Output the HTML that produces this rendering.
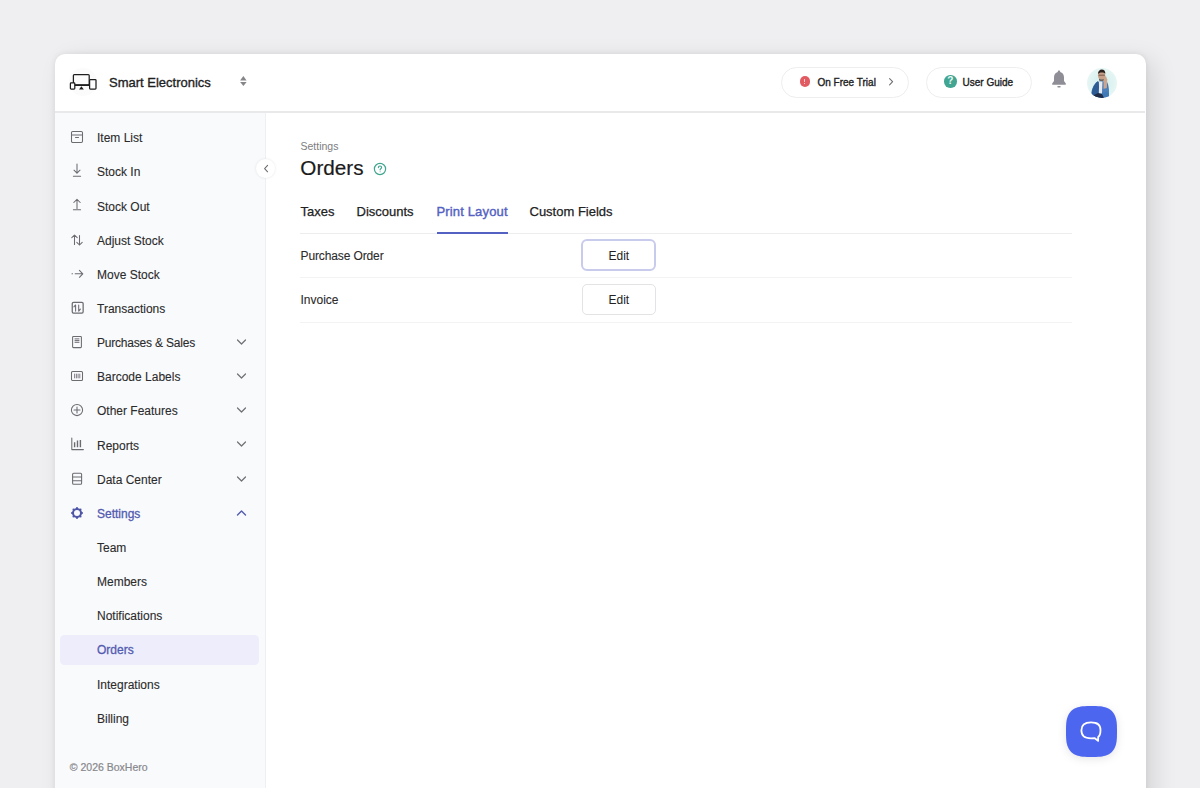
<!DOCTYPE html>
<html><head><meta charset="utf-8">
<style>
*{box-sizing:border-box;margin:0;padding:0}
html,body{width:1200px;height:788px;overflow:hidden;background:#efeff1;font-family:"Liberation Sans",sans-serif;color:#222}
.a{position:absolute}
.t{position:absolute;white-space:nowrap;line-height:1}
.md{-webkit-text-stroke:0.25px currentColor}
</style></head><body>
<div class="a" style="left:55px;top:54.3px;width:1090.5px;height:780px;background:#fff;border-radius:10px;box-shadow:0 0 6px rgba(0,0,0,0.08),8px 6px 24px rgba(0,0,0,0.11)"></div>
<div class="a" style="left:55px;top:111px;width:1090px;height:2px;background:#e9e9eb"></div>
<div class="a" style="left:55px;top:113px;width:210px;height:680px;background:#f9fafc"></div>
<div class="a" style="left:265px;top:113px;width:1px;height:680px;background:#f0f0f3"></div>
<div class="a" style="left:69px;top:68px;width:28px;height:28px;border-radius:50%;background:#fbfbfb"></div>
<svg class="a" style="left:69px;top:72px" width="28" height="20" viewBox="0 0 28 20" fill="none" stroke="#1e1e1e" stroke-width="1.25">
  <rect x="4.4" y="2.6" width="15.8" height="10.4" rx="0.9"/>
  <path d="M4.2 13.1h16" stroke-width="1.7"/>
  <path d="M10 17.4h4.8l-2.4-3.2z" fill="#1e1e1e" stroke="none"/>
  <rect x="20.6" y="7.5" width="6.4" height="9.6" rx="0.8" fill="#fff"/>
  <rect x="1.4" y="10.9" width="4.4" height="6.2" rx="0.8" fill="#fff"/>
</svg>
<div class="t" style="left:109px;top:75.70px;font-size:13px;color:#1f1f1f;-webkit-text-stroke:0.35px #1f1f1f">Smart Electronics</div>
<svg class="a" style="left:239px;top:75px" width="9" height="12" viewBox="0 0 9 12"><path d="M4.35 0.9L7.6 5.6H1.1z" fill="#86868a"/><path d="M4.35 10.9L7.6 7.1H1.1z" fill="#86868a"/></svg>
<div class="a" style="left:781px;top:67px;width:128px;height:31px;border-radius:16px;border:1px solid #eeeef0;background:#fff"></div>
<div class="a" style="left:799.7px;top:76.2px;width:10.4px;height:10.4px;border-radius:50%;background:#e25a62"></div>
<div class="a" style="left:804.4px;top:78.6px;width:1px;height:3.6px;background:#f6c9cc"></div><div class="a" style="left:804.4px;top:83.2px;width:1px;height:1px;background:#f6c9cc"></div>
<div class="t" style="left:817.5px;top:77.83px;font-size:10px;color:#222;-webkit-text-stroke:0.35px #222">On Free Trial</div>
<svg class="a" style="left:886px;top:76px" width="10" height="11" viewBox="0 0 10 11" fill="none" stroke="#6f6f73" stroke-width="1.1" stroke-linecap="round" stroke-linejoin="round"><path d="M3.6 2.6l3 3.1-3 3.1"/></svg>
<div class="a" style="left:926px;top:67px;width:106px;height:31px;border-radius:16px;border:1px solid #eeeef0;background:#fff"></div>
<div class="a" style="left:944px;top:75px;width:12.5px;height:12.5px;border-radius:50%;background:#42a592"></div>
<div class="t" style="left:944px;top:76px;width:12.5px;text-align:center;font-size:10px;font-weight:700;color:#eafaf6">?</div>
<div class="t" style="left:962.5px;top:77.53px;font-size:10px;color:#222;-webkit-text-stroke:0.35px #222">User Guide</div>
<svg class="a" style="left:1051px;top:70px" width="16" height="18" viewBox="0 0 16 18">
<path d="M8 0.6C8.7 0.6 9.2 1.1 9.2 1.8V2.1C11.5 2.7 13 4.7 13 7.3V10.9L14.8 13.5C15.1 14 14.8 14.8 14.2 14.8H1.8C1.2 14.8 0.9 14 1.2 13.5L3 10.9V7.3C3 4.7 4.5 2.7 6.8 2.1V1.8C6.8 1.1 7.3 0.6 8 0.6Z" fill="#8f8e96"/>
<rect x="6.3" y="16" width="3.4" height="1.5" rx="0.7" fill="#8f8e96"/>
</svg>
<svg class="a" style="left:1086px;top:66.5px" width="32" height="32" viewBox="0 0 32 32">
<defs><clipPath id="cav"><circle cx="16" cy="16" r="15"/></clipPath><radialGradient id="rg"><stop offset="0" stop-color="#cfeeee"/><stop offset="1" stop-color="#e6f6f4"/></radialGradient></defs>
<circle cx="16" cy="16" r="15" fill="url(#rg)"/>
<g clip-path="url(#cav)">
<path d="M5 31c0-8 2-13 6-16l5 -1 5 1c2 3 2 9 2 16z" fill="#3f79b6"/>
<path d="M6 24c1-4 3-8 6-10l1 6-2 11H6z" fill="#2d5b94"/>
<path d="M13 14.5h3.5l-.5 12h-3z" fill="#e7e9ee"/>
<path d="M8 28l4-2 4 1 2 4H8z" fill="#1e2c45"/>
<ellipse cx="15.6" cy="8.3" rx="3.6" ry="4.3" fill="#c6a08a"/>
<path d="M12 7c0-3 1.7-4.6 3.8-4.6 2.2 0 3.6 1.5 3.6 4.4-.8-1-2-1.4-3.7-1.4S12.8 5.9 12 7z" fill="#2b221e"/>
<path d="M12.6 8.2h6.2" stroke="#5a3a30" stroke-width=".7"/>
<path d="M13 11.5c1 1.3 4 1.3 5.2 0l-.4 2.2h-4.4z" fill="#4a3a30"/>
<path d="M17.5 11l2.3-2 1.5 3.5-.5 9-3.3 1z" fill="#cba58e"/>
<path d="M16.5 22l5.5-1 .5 3-5 2z" fill="#4b7fb8"/>
</g>
</svg>
<div class="t" style="left:97px;top:132.34px;font-size:12px;color:#2b2b2b;-webkit-text-stroke:0.1px currentColor">Item List</div>
<svg class="a" style="left:69.5px;top:130.20px;overflow:visible" width="14" height="14" viewBox="0 0 14 14" fill="none" stroke="#6c6c70" stroke-width="1.05" stroke-linecap="round" stroke-linejoin="round"><rect x="1.5" y="1.5" width="11" height="11" rx="1.2"/><path d="M1.5 5h11M5.5 7.5h3"/></svg>
<div class="t" style="left:97px;top:166.48px;font-size:12px;color:#2b2b2b;-webkit-text-stroke:0.1px currentColor">Stock In</div>
<svg class="a" style="left:69.5px;top:164.34px;overflow:visible" width="14" height="14" viewBox="0 0 14 14" fill="none" stroke="#6c6c70" stroke-width="1.05" stroke-linecap="round" stroke-linejoin="round"><path d="M7 0v9.2M4 6.2L7 9.2 10 6.2M3.4 12.2h7.2"/></svg>
<div class="t" style="left:97px;top:200.62px;font-size:12px;color:#2b2b2b;-webkit-text-stroke:0.1px currentColor">Stock Out</div>
<svg class="a" style="left:69.5px;top:198.48px;overflow:visible" width="14" height="14" viewBox="0 0 14 14" fill="none" stroke="#6c6c70" stroke-width="1.05" stroke-linecap="round" stroke-linejoin="round"><path d="M7 10.5V1.3M3.8 4.5L7 1.3l3.2 3.2M3.4 11.8h7.2"/></svg>
<div class="t" style="left:97px;top:234.76px;font-size:12px;color:#2b2b2b;-webkit-text-stroke:0.1px currentColor">Adjust Stock</div>
<svg class="a" style="left:69.5px;top:232.62px;overflow:visible" width="14" height="14" viewBox="0 0 14 14" fill="none" stroke="#6c6c70" stroke-width="1.05" stroke-linecap="round" stroke-linejoin="round"><path d="M4.5 11.5V2M1.8 4.7L4.5 2l2.7 2.7M9.5 2.5V12M6.8 9.3L9.5 12l2.7-2.7"/></svg>
<div class="t" style="left:97px;top:268.90px;font-size:12px;color:#2b2b2b;-webkit-text-stroke:0.1px currentColor">Move Stock</div>
<svg class="a" style="left:69.5px;top:266.76px;overflow:visible" width="14" height="14" viewBox="0 0 14 14" fill="none" stroke="#6c6c70" stroke-width="1.05" stroke-linecap="round" stroke-linejoin="round"><path d="M2 6.8h.5M5.2 6.8h7.4M9.4 3.3l3.4 3.5-3.4 3.5"/></svg>
<div class="t" style="left:97px;top:303.04px;font-size:12px;color:#2b2b2b;-webkit-text-stroke:0.1px currentColor">Transactions</div>
<svg class="a" style="left:69.5px;top:300.90px;overflow:visible" width="14" height="14" viewBox="0 0 14 14" fill="none" stroke="#6c6c70" stroke-width="1.05" stroke-linecap="round" stroke-linejoin="round"><rect x="2.25" y="1.25" width="10.9" height="10.9" rx="1.3" stroke-width="1.25"/><path d="M5.6 10.1V3.9L3.9 5.9M8.7 3.9v6.2l1.7-2"/></svg>
<div class="t" style="left:97px;top:337.18px;font-size:12px;color:#2b2b2b;-webkit-text-stroke:0.1px currentColor;letter-spacing:-0.2px">Purchases &amp; Sales</div>
<svg class="a" style="left:69.5px;top:335.04px;overflow:visible" width="14" height="14" viewBox="0 0 14 14" fill="none" stroke="#6c6c70" stroke-width="1.05" stroke-linecap="round" stroke-linejoin="round"><rect x="2.6" y="1.4" width="8.8" height="11.2" rx="0.8"/><path d="M5 3.9h4M5 5.6h4M5 7.3h4" stroke-width="1"/></svg>
<svg class="a" style="left:236px;top:338.04px" width="11" height="8" viewBox="0 0 11 8" fill="none" stroke="#6f6f73" stroke-width="1.2" stroke-linecap="round" stroke-linejoin="round"><path d="M1.5 2l4 4 4-4"/></svg>
<div class="t" style="left:97px;top:371.32px;font-size:12px;color:#2b2b2b;-webkit-text-stroke:0.1px currentColor">Barcode Labels</div>
<svg class="a" style="left:69.5px;top:369.18px;overflow:visible" width="14" height="14" viewBox="0 0 14 14" fill="none" stroke="#6c6c70" stroke-width="1.05" stroke-linecap="round" stroke-linejoin="round"><rect x="1.5" y="2.5" width="11" height="9" rx="1"/><path d="M4.6 4.7v4.6M6.4 4.7v4.6M8.1 4.7v4.6M9.8 4.7v4.6" stroke-width="0.85" stroke-linecap="butt"/></svg>
<svg class="a" style="left:236px;top:372.18px" width="11" height="8" viewBox="0 0 11 8" fill="none" stroke="#6f6f73" stroke-width="1.2" stroke-linecap="round" stroke-linejoin="round"><path d="M1.5 2l4 4 4-4"/></svg>
<div class="t" style="left:97px;top:405.46px;font-size:12px;color:#2b2b2b;-webkit-text-stroke:0.1px currentColor">Other Features</div>
<svg class="a" style="left:69.5px;top:403.32px;overflow:visible" width="14" height="14" viewBox="0 0 14 14" fill="none" stroke="#6c6c70" stroke-width="1.05" stroke-linecap="round" stroke-linejoin="round"><circle cx="7" cy="7" r="5.6"/><path d="M7 4v6M4 7h6"/></svg>
<svg class="a" style="left:236px;top:406.32px" width="11" height="8" viewBox="0 0 11 8" fill="none" stroke="#6f6f73" stroke-width="1.2" stroke-linecap="round" stroke-linejoin="round"><path d="M1.5 2l4 4 4-4"/></svg>
<div class="t" style="left:97px;top:439.60px;font-size:12px;color:#2b2b2b;-webkit-text-stroke:0.1px currentColor">Reports</div>
<svg class="a" style="left:69.5px;top:437.46px;overflow:visible" width="14" height="14" viewBox="0 0 14 14" fill="none" stroke="#6c6c70" stroke-width="1.05" stroke-linecap="round" stroke-linejoin="round"><path d="M1.8 1v11.6h11.6"/><path d="M4.6 10.2V5.2M7.5 10.2V3.6M10.4 10.2V2.9" stroke-width="1.4" stroke-linecap="butt"/></svg>
<svg class="a" style="left:236px;top:440.46px" width="11" height="8" viewBox="0 0 11 8" fill="none" stroke="#6f6f73" stroke-width="1.2" stroke-linecap="round" stroke-linejoin="round"><path d="M1.5 2l4 4 4-4"/></svg>
<div class="t" style="left:97px;top:473.74px;font-size:12px;color:#2b2b2b;-webkit-text-stroke:0.1px currentColor">Data Center</div>
<svg class="a" style="left:69.5px;top:471.60px;overflow:visible" width="14" height="14" viewBox="0 0 14 14" fill="none" stroke="#6c6c70" stroke-width="1.05" stroke-linecap="round" stroke-linejoin="round"><rect x="2.6" y="1.3" width="9" height="11" rx="1"/><path d="M2.6 4.9h9M2.6 8.7h9"/></svg>
<svg class="a" style="left:236px;top:474.60px" width="11" height="8" viewBox="0 0 11 8" fill="none" stroke="#6f6f73" stroke-width="1.2" stroke-linecap="round" stroke-linejoin="round"><path d="M1.5 2l4 4 4-4"/></svg>
<div class="t" style="left:97px;top:507.88px;font-size:12px;color:#535bb0;-webkit-text-stroke:0.3px currentColor">Settings</div>
<svg class="a" style="left:236px;top:508.74px" width="11" height="8" viewBox="0 0 11 8" fill="none" stroke="#535bb0" stroke-width="1.4" stroke-linecap="round" stroke-linejoin="round"><path d="M1.5 6l4-4 4 4"/></svg>
<svg class="a" style="left:69.6px;top:505.6px" width="14" height="14" viewBox="0 0 14 14">
<path fill-rule="evenodd" d="M5.83 2.14 L6.53 1.02 L7.47 1.02 L8.17 2.14 L9.61 2.74 L10.90 2.44 L11.56 3.10 L11.26 4.39 L11.86 5.83 L12.98 6.53 L12.98 7.47 L11.86 8.17 L11.26 9.61 L11.56 10.90 L10.90 11.56 L9.61 11.26 L8.17 11.86 L7.47 12.98 L6.53 12.98 L5.83 11.86 L4.39 11.26 L3.10 11.56 L2.44 10.90 L2.74 9.61 L2.14 8.17 L1.02 7.47 L1.02 6.53 L2.14 5.83 L2.74 4.39 L2.44 3.10 L3.10 2.44 L4.39 2.74Z M10 7A3 3 0 1 0 4 7A3 3 0 1 0 10 7Z" fill="#4f56a8"/>
</svg>
<div class="t" style="left:97px;top:542.02px;font-size:12px;color:#2b2b2b;-webkit-text-stroke:0.1px currentColor">Team</div>
<div class="t" style="left:97px;top:576.16px;font-size:12px;color:#2b2b2b;-webkit-text-stroke:0.1px currentColor">Members</div>
<div class="t" style="left:97px;top:610.30px;font-size:12px;color:#2b2b2b;-webkit-text-stroke:0.1px currentColor">Notifications</div>
<div class="a" style="left:60px;top:635.3px;width:199px;height:29.4px;border-radius:4.5px;background:#ededfb"></div>
<div class="t" style="left:97px;top:644.44px;font-size:12px;color:#535bb0;-webkit-text-stroke:0.3px currentColor">Orders</div>
<div class="t" style="left:97px;top:678.58px;font-size:12px;color:#2b2b2b;-webkit-text-stroke:0.1px currentColor">Integrations</div>
<div class="t" style="left:97px;top:712.72px;font-size:12px;color:#2b2b2b;-webkit-text-stroke:0.1px currentColor">Billing</div>
<div class="t" style="left:69.8px;top:762.41px;font-size:10.5px;color:#88888c;-webkit-text-stroke:0.2px currentColor">© 2026 BoxHero</div>
<div class="a" style="left:256px;top:159px;width:19px;height:19px;border-radius:50%;background:#fff;box-shadow:0 0 3px rgba(0,0,0,0.10)"></div>
<svg class="a" style="left:261px;top:163px" width="10" height="11" viewBox="0 0 10 11" fill="none" stroke="#6a6a6e" stroke-width="1.05" stroke-linecap="round" stroke-linejoin="round"><path d="M6.6 2.4l-3 3.2 3 3.2"/></svg>
<div class="t" style="left:300.5px;top:140.81px;font-size:10.5px;color:#7d7d80;">Settings</div>
<div class="t" style="left:300.3px;top:158.28px;font-size:20.7px;color:#1b1b1b;-webkit-text-stroke:0.2px #1b1b1b">Orders</div>
<svg class="a" style="left:372.6px;top:162.4px" width="14" height="14" viewBox="0 0 14 14" fill="none" stroke="#3fa58e" stroke-width="1.2"><circle cx="7" cy="7" r="5.6"/><path d="M5.4 5.6c0-1 .7-1.6 1.6-1.6s1.6.6 1.6 1.5c0 1.2-1.5 1.2-1.5 2.3" stroke-linecap="round"/><circle cx="7.1" cy="9.8" r=".5" fill="#3fa58e" stroke="none"/></svg>
<div class="t" style="left:300.5px;top:204.70px;font-size:13px;color:#222;-webkit-text-stroke:0.25px currentColor">Taxes</div>
<div class="t" style="left:356.5px;top:204.70px;font-size:13px;color:#222;-webkit-text-stroke:0.25px currentColor">Discounts</div>
<div class="t" style="left:436.5px;top:204.70px;font-size:13px;color:#5361c2;-webkit-text-stroke:0.4px currentColor;letter-spacing:0.15px">Print Layout</div>
<div class="t" style="left:529.5px;top:204.70px;font-size:13px;color:#222;-webkit-text-stroke:0.25px currentColor">Custom Fields</div>
<div class="a" style="left:300px;top:232.5px;width:772px;height:1px;background:#ededef"></div>
<div class="a" style="left:437px;top:231.5px;width:71px;height:2.5px;background:#5361c2"></div>
<div class="t" style="left:300.5px;top:249.64px;font-size:12px;color:#2b2b2b;letter-spacing:-0.12px;-webkit-text-stroke:0.1px currentColor">Purchase Order</div>
<div class="a" style="left:300px;top:277px;width:772px;height:1px;background:#f3f3f5"></div>
<div class="t" style="left:300.5px;top:294.04px;font-size:12px;color:#2b2b2b;-webkit-text-stroke:0.1px currentColor">Invoice</div>
<div class="a" style="left:300px;top:321.5px;width:772px;height:1px;background:#f3f3f5"></div>
<div class="a" style="left:581px;top:239px;width:75px;height:32px;border-radius:6px;border:2px solid #c9cbec;background:#fff"></div>
<div class="t" style="left:608.5px;top:249.64px;font-size:12px;color:#222;">Edit</div>
<div class="a" style="left:582px;top:284.3px;width:74px;height:30.7px;border-radius:5px;border:1px solid #e3e3e6;background:#fff"></div>
<div class="t" style="left:608.5px;top:294.34px;font-size:12px;color:#222;">Edit</div>
<svg class="a" style="left:1066px;top:705.5px;filter:drop-shadow(0 2px 4px rgba(0,0,0,0.10))" width="51" height="51" viewBox="0 0 51 51"><path d="M51.00 25.50 L50.96 29.89 L50.86 32.36 L50.68 34.38 L50.44 36.16 L50.12 37.76 L49.73 39.22 L49.27 40.56 L48.74 41.81 L48.14 42.95 L47.46 44.01 L46.71 44.99 L45.89 45.89 L44.99 46.71 L44.01 47.46 L42.95 48.14 L41.81 48.74 L40.56 49.27 L39.22 49.73 L37.76 50.12 L36.16 50.44 L34.38 50.68 L32.36 50.86 L29.89 50.96 L25.50 51.00 L21.11 50.96 L18.64 50.86 L16.62 50.68 L14.84 50.44 L13.24 50.12 L11.78 49.73 L10.44 49.27 L9.19 48.74 L8.05 48.14 L6.99 47.46 L6.01 46.71 L5.11 45.89 L4.29 44.99 L3.54 44.01 L2.86 42.95 L2.26 41.81 L1.73 40.56 L1.27 39.22 L0.88 37.76 L0.56 36.16 L0.32 34.38 L0.14 32.36 L0.04 29.89 L0.00 25.50 L0.04 21.11 L0.14 18.64 L0.32 16.62 L0.56 14.84 L0.88 13.24 L1.27 11.78 L1.73 10.44 L2.26 9.19 L2.86 8.05 L3.54 6.99 L4.29 6.01 L5.11 5.11 L6.01 4.29 L6.99 3.54 L8.05 2.86 L9.19 2.26 L10.44 1.73 L11.78 1.27 L13.24 0.88 L14.84 0.56 L16.62 0.32 L18.64 0.14 L21.11 0.04 L25.50 0.00 L29.89 0.04 L32.36 0.14 L34.38 0.32 L36.16 0.56 L37.76 0.88 L39.22 1.27 L40.56 1.73 L41.81 2.26 L42.95 2.86 L44.01 3.54 L44.99 4.29 L45.89 5.11 L46.71 6.01 L47.46 6.99 L48.14 8.05 L48.74 9.19 L49.27 10.44 L49.73 11.78 L50.12 13.24 L50.44 14.84 L50.68 16.62 L50.86 18.64 L50.96 21.11Z" fill="#4d66ef"/></svg>
<svg class="a" style="left:1078px;top:718.7px" width="26" height="26" viewBox="0 0 26 26" fill="none" stroke="#fff" stroke-width="1.8" stroke-linejoin="round">
<path d="M13 3.4C19.6 3.4 22.5 5.6 22.5 11C22.5 14.6 21.6 16.9 20.2 18L20.1 21.9L16.8 19.2C15.6 19.3 14.4 19.3 13 19.3C6.4 19.3 3.4 16.8 3.4 11.3C3.4 5.8 6.4 3.4 13 3.4Z"/>
</svg>
</body></html>
